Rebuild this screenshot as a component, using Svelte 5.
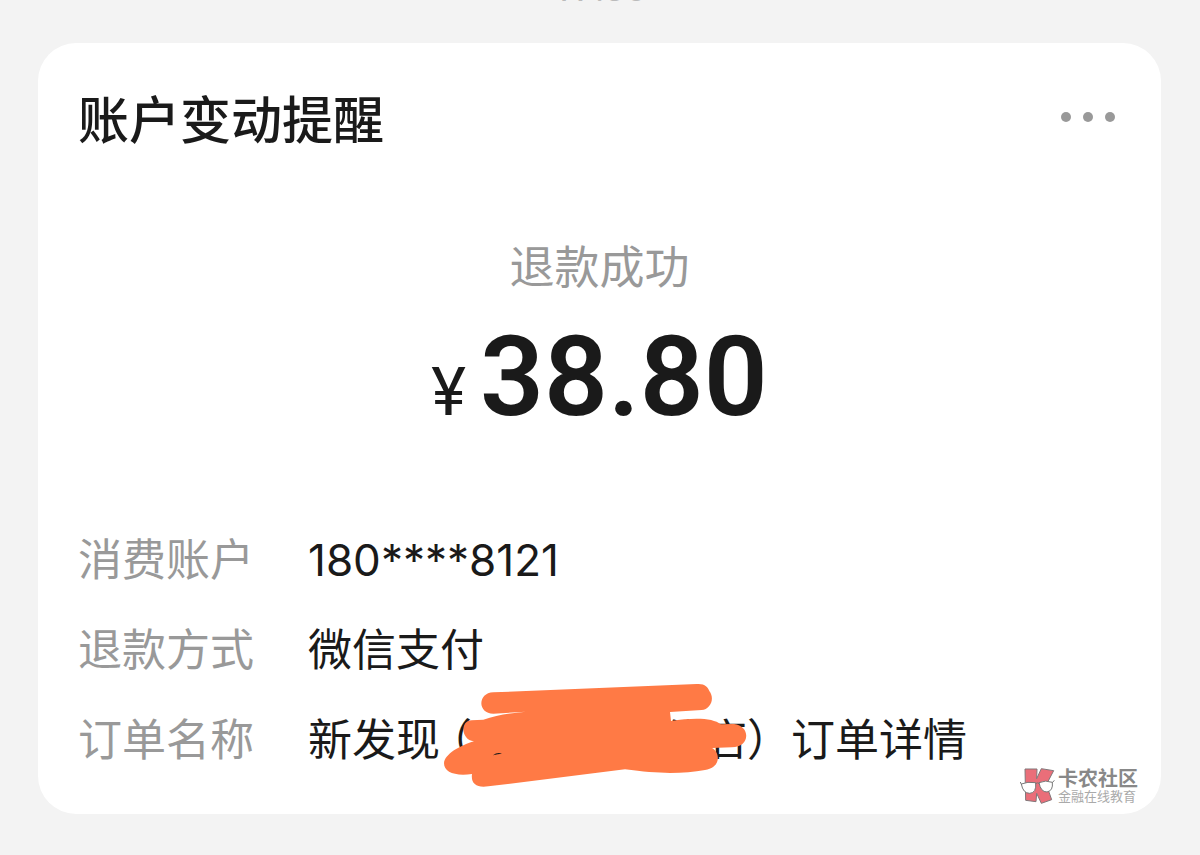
<script lang="ts">
  interface Props {
    time?: string;
    title?: string;
    status?: string;
    amount?: string;
  }

  let {
    time = '17:38',
    title = '账户变动提醒',
    status = '退款成功',
    amount = '38.80'
  }: Props = $props();

  const rows = [
    { label: '消费账户', value: '180****8121' },
    { label: '退款方式', value: '微信支付' }
  ];
</script>

<main class="page">
  <div class="time"><span>{time}</span></div>

  <article class="card">
    <header class="header">
      <h1>{title}</h1>
      <button class="more" type="button" aria-label="更多">
        <i></i><i></i><i></i>
      </button>
    </header>

    <section class="summary">
      <p class="status">{status}</p>
      <p class="amount"><span class="currency">¥</span>{amount}</p>
    </section>

    <dl class="details">
      {#each rows as row}
        <dt>{row.label}</dt>
        <dd>{row.value}</dd>
      {/each}
      <dt>订单名称</dt>
      <dd class="order">
        新发现<span class="bracket">（</span><span class="hidden-name"></span>分店）订单详情
        <svg class="scribble" viewBox="0 0 1020 390" aria-hidden="true">
          <path
            fill="#ff7a45"
            d="M190 70 L800 45 C824 43 834 54 838 66 C856 90 840 121 815 123 L720 129 L723 156 C790 145 850 146 872 166 L912 165 C962 170 962 235 905 235 L846 237 C870 250 875 295 825 303 C760 314 690 316 585 301 L175 352 C140 357 122 345 126 315 C75 322 42 310 42 283 C44 255 90 230 132 217 C92 212 90 155 125 154 L160 152 C215 132 280 128 340 125 L190 134 C142 134 142 72 190 70Z"
          />
          <path fill="#1a1a1a" d="M189 259 Q202 248 216 254 Q204 254 189 259Z" />
        </svg>
      </dd>
    </dl>

    <aside class="watermark">
      <svg viewBox="0 0 105 108" aria-hidden="true">
        <g fill="#ea6e79" stroke="#817779" stroke-width="3" stroke-linejoin="round">
          <path d="M15 3 H51 L50 32 L64 2 L101 8 L79 50 L95 95 L64 106 L50 76 L48 101 L17 97Z" />
        </g>
        <g fill="#fff" stroke="#777" stroke-width="3">
          <path d="M4 48 Q22 40 47 44 Q50 75 29 76 Q9 76 4 48Z" />
          <path d="M57 44 Q77 35 97 43 Q100 68 81 72 Q62 72 57 44Z" />
          <path fill="none" d="M47 47 Q52 42 58 47 M4 49 L1 42 M97 44 L103 37" />
        </g>
      </svg>
      <div>
        <strong>卡农社区</strong>
        <small>金融在线教育</small>
      </div>
    </aside>
  </article>
</main>

<style>
  :global(body) {
    background: #f3f3f3;
  }

  .page {
    padding: 0 39px 40px 38px;
    font-family: Roboto, 'Noto Sans CJK SC', sans-serif;
    color: #1a1a1a;
  }

  .time {
    display: flex;
    justify-content: center;
    align-items: flex-end;
    height: 1px;
    margin-bottom: 42px;
    overflow: hidden;
    font-size: 38px;
    line-height: 26px;
    color: #bbb;
  }

  .card {
    position: relative;
    padding: 44px 40px;
    background: #fff;
    border-radius: 38px;
  }

  .header {
    display: flex;
    justify-content: space-between;
    align-items: flex-start;
  }

  h1 {
    margin: 0;
    font-size: 51px;
    font-weight: 500;
    line-height: 70px;
  }

  .more {
    display: flex;
    gap: 12px;
    padding: 25px 6px;
    border: 0;
    background: none;
  }

  .more i {
    width: 10px;
    height: 10px;
    border-radius: 50%;
    background: #999;
  }

  .summary {
    margin-top: 82px;
    text-align: center;
  }

  .status {
    margin: 0;
    font-size: 45px;
    line-height: 60px;
    color: #999;
  }

  .amount {
    display: flex;
    justify-content: center;
    align-items: baseline;
    gap: 14px;
    margin: 12px 0 0;
    font-size: 112px;
    font-weight: 600;
    line-height: 132px;
  }

  .currency {
    font-size: 66px;
    font-weight: 400;
  }

  .details {
    display: grid;
    grid-template-columns: auto 1fr;
    gap: 30px 54px;
    margin: 71px 0 0;
    font-family: Inter, 'Noto Sans CJK SC', sans-serif;
    font-size: 44px;
    line-height: 60px;
  }

  dt {
    color: #999;
  }

  dd {
    margin: 0;
  }

  .order {
    position: relative;
    white-space: nowrap;
  }

  .bracket {
    display: inline-block;
    width: 32px;
    text-align: right;
    font-feature-settings: 'halt';
  }

  .hidden-name {
    display: inline-block;
    width: 187px;
  }

  .scribble {
    position: absolute;
    top: -41px;
    left: 122px;
    width: 340px;
    height: 130px;
  }

  .watermark {
    position: absolute;
    right: 23px;
    bottom: 10px;
    display: flex;
    align-items: center;
    gap: 3px;
    color: #888;
  }

  .watermark svg {
    width: 35px;
    height: 36px;
  }

  .watermark strong,
  .watermark small {
    display: block;
  }

  .watermark strong {
    font-size: 20px;
    font-weight: 700;
    line-height: 22px;
  }

  .watermark small {
    font-size: 13px;
    line-height: 14px;
    color: #aaa;
  }
</style>
